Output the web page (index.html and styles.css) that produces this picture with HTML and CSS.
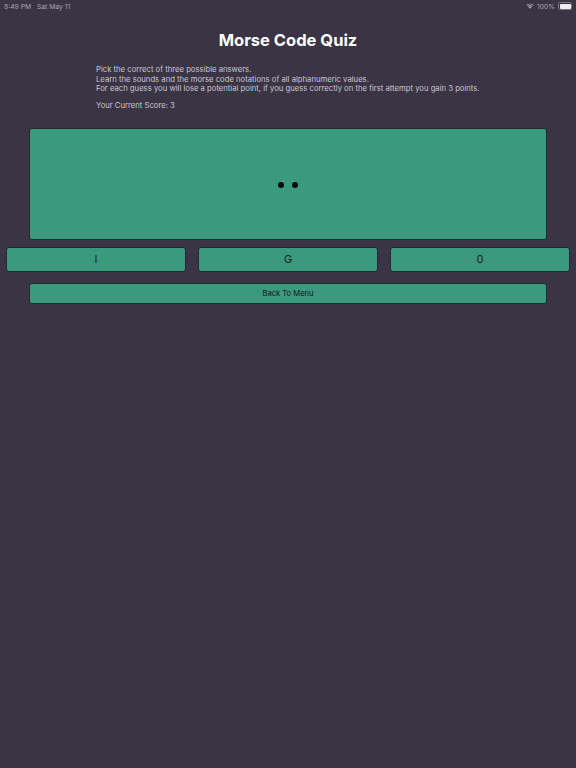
FILE: index.html
```html
<!DOCTYPE html>
<html>
<head>
<meta charset="utf-8">
<link rel="stylesheet" href="styles.css">
</head>
<body>
<div class="status">
  <span class="status-left">8:49 PM&nbsp;&nbsp;&nbsp;Sat May 11</span>
  <span class="status-right">
    <svg class="wifi" width="8" height="6" viewBox="0 0 16 12"><path d="M8 11.5 L5.6 8.8 A3.5 3.5 0 0 1 10.4 8.8 Z" fill="#bbb"/><path d="M3.4 6.6 A6.6 6.6 0 0 1 12.6 6.6 L11.4 7.9 A4.9 4.9 0 0 0 4.6 7.9 Z" fill="#bbb"/><path d="M1 4.2 A10 10 0 0 1 15 4.2 L13.8 5.5 A8.3 8.3 0 0 0 2.2 5.5 Z" fill="#bbb"/></svg>
    <span class="pct">100%</span>
    <span class="battery"><span class="battery-fill"></span></span>
  </span>
</div>
<h1 class="title">Morse Code Quiz</h1>
<div class="info">
  <p class="intro">Pick the correct of three possible answers.<br>Learn the sounds and the morse code notations of all alphanumeric values.<br>For each guess you will lose a potential point, if you guess correctly on the first attempt you gain 3 points.</p>
  <p class="score">Your Current Score: 3</p>
</div>
<div class="code-box">
  <span class="dot"></span><span class="dot"></span>
</div>
<div class="answers">
  <button class="answer">I</button>
  <button class="answer">G</button>
  <button class="answer">0</button>
</div>
<button class="back">Back To Menu</button>
</body>
</html>
```
FILE: styles.css
```css
html, body {
  margin: 0;
  padding: 0;
  background: #3a3445;
  font-family: Inter, "Liberation Sans", sans-serif;
  height: 100%;
}
.status {
  height: 12px;
  display: flex;
  justify-content: space-between;
  align-items: center;
  padding: 0 4px;
  font-size: 6.8px;
  color: #aaa6b0;
}
.status-right {
  display: flex;
  align-items: center;
  gap: 3px;
}
.battery {
  width: 11px;
  height: 5px;
  border: 0.5px solid #777;
  border-radius: 1.5px;
  padding: 0.5px;
  display: flex;
}
.battery-fill {
  flex: 1;
  background: #eee;
  border-radius: 1px;
}
.title {
  margin: 0;
  padding-top: 18px;
  text-align: center;
  font-size: 16.5px;
  line-height: 20px;
  font-weight: 700;
  color: #ffffff;
}
.info {
  margin: 15px 0 0 96px;
  color: #c9c6ce;
  font-size: 7.7px;
  line-height: 9.5px;
}
.intro {
  margin: 0;
}
.score {
  margin: 7.5px 0 0;
}
.code-box {
  margin: 17px 29px 0;
  height: 112px;
  box-sizing: border-box;
  padding-top: 3px;
  background: #3b997d;
  border: 1px solid #1e2a2b;
  border-radius: 3px;
  display: flex;
  justify-content: center;
  align-items: center;
  gap: 8px;
}
.dot {
  width: 6px;
  height: 6px;
  border-radius: 50%;
  background: #0a0a0a;
}
.answers {
  display: flex;
  gap: 12px;
  padding: 0 6px;
  margin-top: 7px;
}
.answer {
  flex: 1;
  height: 25px;
  background: #3b997d;
  border: 1px solid #1e2a2b;
  border-radius: 3px;
  font-family: Inter, "Liberation Sans", sans-serif;
  font-size: 11px;
  color: #1a1f1e;
  padding: 0;
}
.back {
  display: block;
  box-sizing: border-box;
  width: calc(100% - 58px);
  margin: 11px 29px 0;
  height: 21px;
  background: #3b997d;
  border: 1px solid #1e2a2b;
  border-radius: 3px;
  font-family: Inter, "Liberation Sans", sans-serif;
  font-size: 7.6px;
  color: #111816;
  padding: 0;
}
```
